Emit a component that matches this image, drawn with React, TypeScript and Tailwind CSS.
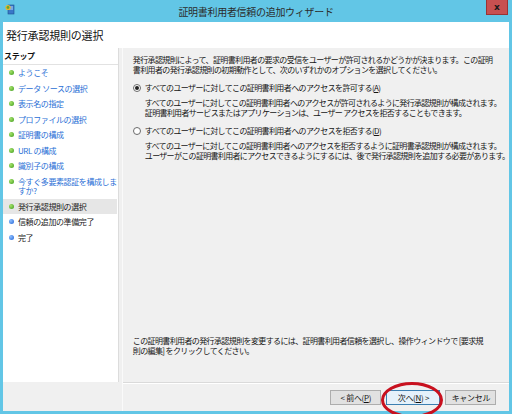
import React from "react";

const jp = { fontFamily: '"Noto Sans CJK JP", "Noto Sans", sans-serif' };

function Bullet({ color }: { color: "green" | "blue" }) {
  const c = color === "green" ? "bg-[radial-gradient(circle_at_35%_35%,#a6e36a,#3c9a1c)]" : "bg-[radial-gradient(circle_at_35%_35%,#8fc0ff,#1f62d6)]";
  return <span className={`w-[5px] h-[5px] rounded-full shrink-0 ${c}`}></span>;
}

function StepItem({ lines, bullet, state }: { lines: string[]; bullet: "green" | "blue"; state: "done" | "current" | "todo" }) {
  const text = state === "done" ? "text-[#2a6fd6]" : "text-[#1a1a1a]";
  return (
    <div className={`flex items-start gap-[4px] pl-[6px] py-[3px] ${state === "current" ? "bg-[#e6e6e6]" : ""}`}>
      <span className="h-[9.5px] flex items-center"><Bullet color={bullet} /></span>
      <div className={`text-[8px] leading-[9.5px] tracking-[-0.4px] ${text}`}>
        {lines.map((l, i) => (
          <div key={i} className="whitespace-nowrap">{l}</div>
        ))}
      </div>
    </div>
  );
}

function Radio({ checked }: { checked?: boolean }) {
  return (
    <span className="w-[8px] h-[8px] rounded-full border border-[#6b6b6b] bg-white flex items-center justify-center shrink-0">
      {checked && <span className="w-[4px] h-[4px] rounded-full bg-[#222]"></span>}
    </span>
  );
}

function Btn({ children, focused, w }: { children: React.ReactNode; focused?: boolean; w: string }) {
  return (
    <div
      className={`${w} h-[15px] flex items-center justify-center text-[8px] tracking-[-0.3px] text-[#111] border ${
        focused ? "border-[#3c7fb1] bg-[#e5f1fb]" : "border-[#adadad] bg-[#e1e1e1]"
      }`}
    >
      {children}
    </div>
  );
}

export default function App() {
  const steps: { lines: string[]; bullet: "green" | "blue"; state: "done" | "current" | "todo" }[] = [
    { lines: ["ようこそ"], bullet: "green", state: "done" },
    { lines: ["データ ソースの選択"], bullet: "green", state: "done" },
    { lines: ["表示名の指定"], bullet: "green", state: "done" },
    { lines: ["プロファイルの選択"], bullet: "green", state: "done" },
    { lines: ["証明書の構成"], bullet: "green", state: "done" },
    { lines: ["URL の構成"], bullet: "green", state: "done" },
    { lines: ["識別子の構成"], bullet: "green", state: "done" },
    { lines: ["今すぐ多要素認証を構成しま", "すか?"], bullet: "green", state: "done" },
    { lines: ["発行承認規則の選択"], bullet: "green", state: "current" },
    { lines: ["信頼の追加の準備完了"], bullet: "blue", state: "todo" },
    { lines: ["完了"], bullet: "blue", state: "todo" },
  ];

  return (
    <div className="w-[512px] h-[414px] bg-[#62c6e6] flex flex-col relative overflow-hidden" style={jp}>
      {/* title bar */}
      <div className="h-[22px] flex items-center relative">
        <svg className="absolute left-[5px] top-[4px]" width="10" height="11" viewBox="0 0 10 11">
          <rect x="3" y="1" width="6" height="9" fill="#3a78c8" stroke="#1d4f8f" strokeWidth="0.6" />
          <rect x="4" y="2.5" width="4" height="1" fill="#bcd8f5" />
          <rect x="4" y="4.5" width="4" height="1" fill="#bcd8f5" />
          <circle cx="3" cy="3.5" r="2.6" fill="#e8b62c" />
          <circle cx="3" cy="3.5" r="1.4" fill="#5aa83a" />
        </svg>
        <div className="flex-1 text-center text-[10px] text-[#2b2b2b] tracking-[-0.3px]">証明書利用者信頼の追加ウィザード</div>
        <div className="absolute right-[4px] top-0 w-[22px] h-[15px] bg-[#c75050] border border-[#9a3333] border-t-0 flex items-center justify-center">
          <span className="text-[9px] font-bold leading-none text-[#1a1a1a]" style={{ fontFamily: '"DejaVu Sans", sans-serif' }}>x</span>
        </div>
      </div>

      {/* client */}
      <div className="flex-1 mx-[3px] mb-[3px] bg-[#f0f0f0] flex flex-col">
        <div className="h-[26px] bg-white flex items-center pl-[3px]">
          <span className="text-[11px] text-[#111] tracking-[-0.2px]">発行承認規則の選択</span>
        </div>

        <div className="flex-1 flex">
          {/* left steps */}
          <div className="w-[116px] flex flex-col">
            <div className="flex-1 bg-white border-r border-[#dcdcdc] flex flex-col">
              <div className="h-[17px] flex items-center pl-[1px] border-b border-[#e2e2e2]">
                <span className="text-[8px] font-bold text-[#111] tracking-[-0.3px]">ステップ</span>
              </div>
              <div className="pr-[1px]">
                {steps.map((s, i) => (
                  <StepItem key={i} lines={s.lines} bullet={s.bullet} state={s.state} />
                ))}
              </div>
            </div>
            <div className="h-[29px]"></div>
          </div>

          {/* right content */}
          <div className="flex-1 ml-[3px] flex flex-col border-l border-[#fafafa]">
            <div className="flex-1 flex flex-col pl-[10px] pt-[7px] pb-[26px] text-[8px] leading-[10px] tracking-[-0.62px] text-[#141414]">
              <div className="whitespace-nowrap">
                <div>発行承認規則によって、証明書利用者の要求の受信をユーザーが許可されるかどうかが決まります。この証明</div>
                <div>書利用者の発行承認規則の初期動作として、次のいずれかのオプションを選択してください。</div>
              </div>

              <div className="mt-[8px] flex items-center gap-[4px] whitespace-nowrap">
                <Radio checked />
                <span>
                  すべてのユーザーに対してこの証明書利用者へのアクセスを許可する(<span className="underline">A</span>)
                </span>
              </div>
              <div className="mt-[5px] pl-[12px] whitespace-nowrap tracking-[-0.68px]">
                <div>すべてのユーザーに対してこの証明書利用者へのアクセスが許可されるように発行承認規則が構成されます。</div>
                <div>証明書利用者サービスまたはアプリケーションは、ユーザー アクセスを拒否することもできます。</div>
              </div>

              <div className="mt-[8px] flex items-center gap-[4px] whitespace-nowrap">
                <Radio />
                <span>
                  すべてのユーザーに対してこの証明書利用者へのアクセスを拒否する(<span className="underline">D</span>)
                </span>
              </div>
              <div className="mt-[5px] pl-[12px] whitespace-nowrap tracking-[-0.68px]">
                <div>すべてのユーザーに対してこの証明書利用者へのアクセスを拒否するように証明書承認規則が構成されます。</div>
                <div>ユーザーがこの証明書利用者にアクセスできるようにするには、後で発行承認規則を追加する必要があります。</div>
              </div>

              <div className="mt-auto whitespace-nowrap">
                <div>この証明書利用者の発行承認規則を変更するには、証明書利用者信頼を選択し、操作ウィンドウで [要求規</div>
                <div>則の編集] をクリックしてください。</div>
              </div>
            </div>
            <div className="h-px bg-[#dadada]"></div>
            <div className="h-px bg-white"></div>
            <div className="h-[27px] flex items-center justify-end gap-[5px] pr-[13px]">
              <Btn w="w-[51px]">
                &lt; 前へ(<span className="underline">P</span>)
              </Btn>
              <Btn w="w-[54px]" focused>
                次へ(<span className="underline">N</span>) &gt;
              </Btn>
              <Btn w="w-[51px]">キャンセル</Btn>
            </div>
          </div>
        </div>
      </div>

      {/* red annotation ellipse */}
      <div className="absolute left-[381px] top-[382px] w-[62px] h-[36px] rounded-[50%] border-[3px] border-[#c8101e]"></div>
    </div>
  );
}
